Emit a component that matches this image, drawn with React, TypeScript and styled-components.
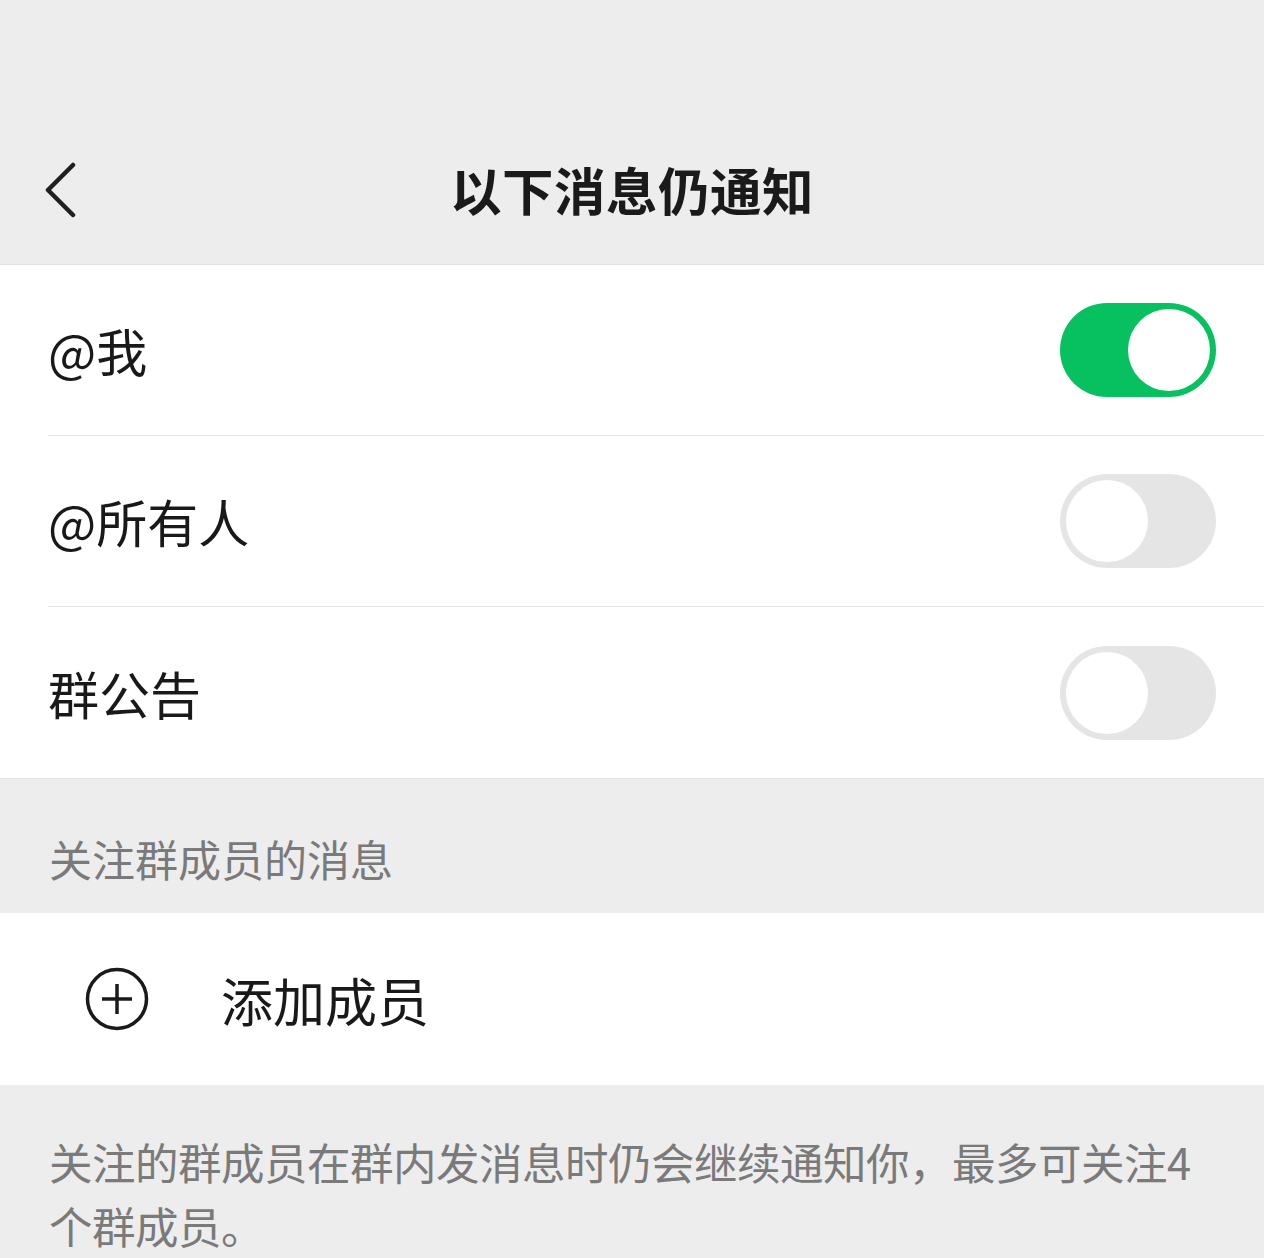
import React, { useState } from 'react';
import styled, { createGlobalStyle } from 'styled-components';

const GlobalStyle = createGlobalStyle`
  html, body {
    margin: 0;
    padding: 0;
    background: #ededed;
  }
  * {
    box-sizing: border-box;
  }
  body {
    font-family: "Noto Sans CJK SC", "Noto Sans", sans-serif;
    color: #191919;
  }
`;

const Page = styled.div`
  width: 1264px;
  min-height: 1258px;
  background: #ededed;
  overflow: hidden;
`;

const Header = styled.header`
  padding-top: 116px;
  border-bottom: 1px solid #e2e2e2;
`;

const NavBar = styled.div`
  position: relative;
  height: 148px;
  display: flex;
  align-items: center;
  justify-content: center;
`;

const BackButton = styled.button`
  position: absolute;
  left: 40px;
  top: 50%;
  transform: translateY(-50%);
  background: none;
  border: none;
  padding: 0;
  display: flex;
  cursor: pointer;
`;

const Title = styled.h1`
  margin: 0 0 4px;
  font-size: 51.5px;
  font-weight: 700;
  color: #1a1a1a;
  letter-spacing: 0.5px;
`;

const Group = styled.section`
  background: #fff;
  border-bottom: 1px solid #e4e4e4;
`;

const Row = styled.div<{ $last?: boolean }>`
  height: 171px;
  margin-left: 48px;
  padding-right: 48px;
  display: flex;
  align-items: center;
  justify-content: space-between;
  border-bottom: ${(p) => (p.$last ? 'none' : '1px solid #e6e6e6')};
`;

const Label = styled.span`
  font-size: 51px;
  color: #191919;
`;

const Switch = styled.button<{ $on: boolean }>`
  position: relative;
  width: 156px;
  height: 94px;
  border-radius: 47px;
  border: none;
  padding: 0;
  cursor: pointer;
  background: ${(p) => (p.$on ? '#07c160' : '#e5e5e5')};
  transition: background 0.2s;
`;

const Knob = styled.span<{ $on: boolean }>`
  position: absolute;
  top: 6px;
  left: ${(p) => (p.$on ? '68px' : '6px')};
  width: 82px;
  height: 82px;
  border-radius: 50%;
  background: #fff;
  transition: left 0.2s;
`;

const SectionTitle = styled.div`
  height: 134px;
  padding: 48px 0 0 49px;
  font-size: 43px;
  color: #7a7a7a;
`;

const AddRow = styled.div`
  height: 172px;
  background: #fff;
  display: flex;
  align-items: center;
  padding-left: 85px;
  gap: 72px;
`;

const AddText = styled.span`
  font-size: 52px;
  color: #191919;
`;

const Footer = styled.p`
  margin: 0;
  padding: 45px 50px 0 49px;
  font-size: 43.5px;
  letter-spacing: -0.5px;
  line-height: 64px;
  color: #7a7a7a;
`;

const BackIcon = () => (
  <svg width="40" height="56" viewBox="0 0 40 56">
    <polyline points="33,3 8,28 33,53" fill="none" stroke="#1f1f1f" strokeWidth="4.5" strokeLinecap="round" strokeLinejoin="round" />
  </svg>
);

const PlusCircleIcon = () => (
  <svg width="64" height="64" viewBox="0 0 64 64">
    <circle cx="32" cy="32" r="29.5" fill="none" stroke="#1a1a1a" strokeWidth="3.5" />
    <line x1="32" y1="17" x2="32" y2="47" stroke="#1a1a1a" strokeWidth="3.5" />
    <line x1="17" y1="32" x2="47" y2="32" stroke="#1a1a1a" strokeWidth="3.5" />
  </svg>
);

const Toggle = ({ on, onToggle }: { on: boolean; onToggle: () => void }) => (
  <Switch $on={on} onClick={onToggle}>
    <Knob $on={on} />
  </Switch>
);

const App: React.FC = () => {
  const [settings, setSettings] = useState({ me: true, all: false, notice: false });

  const items: { key: keyof typeof settings; label: string }[] = [
    { key: 'me', label: '@我' },
    { key: 'all', label: '@所有人' },
    { key: 'notice', label: '群公告' },
  ];

  return (
    <Page>
      <GlobalStyle />
      <Header>
        <NavBar>
          <BackButton aria-label="返回">
            <BackIcon />
          </BackButton>
          <Title>以下消息仍通知</Title>
        </NavBar>
      </Header>

      <Group>
        {items.map((item, i) => (
          <Row key={item.key} $last={i === items.length - 1}>
            <Label>{item.label}</Label>
            <Toggle
              on={settings[item.key]}
              onToggle={() => setSettings((s) => ({ ...s, [item.key]: !s[item.key] }))}
            />
          </Row>
        ))}
      </Group>

      <SectionTitle>关注群成员的消息</SectionTitle>

      <AddRow>
        <PlusCircleIcon />
        <AddText>添加成员</AddText>
      </AddRow>

      <Footer>关注的群成员在群内发消息时仍会继续通知你，最多可关注4个群成员。</Footer>
    </Page>
  );
};

export default App;
